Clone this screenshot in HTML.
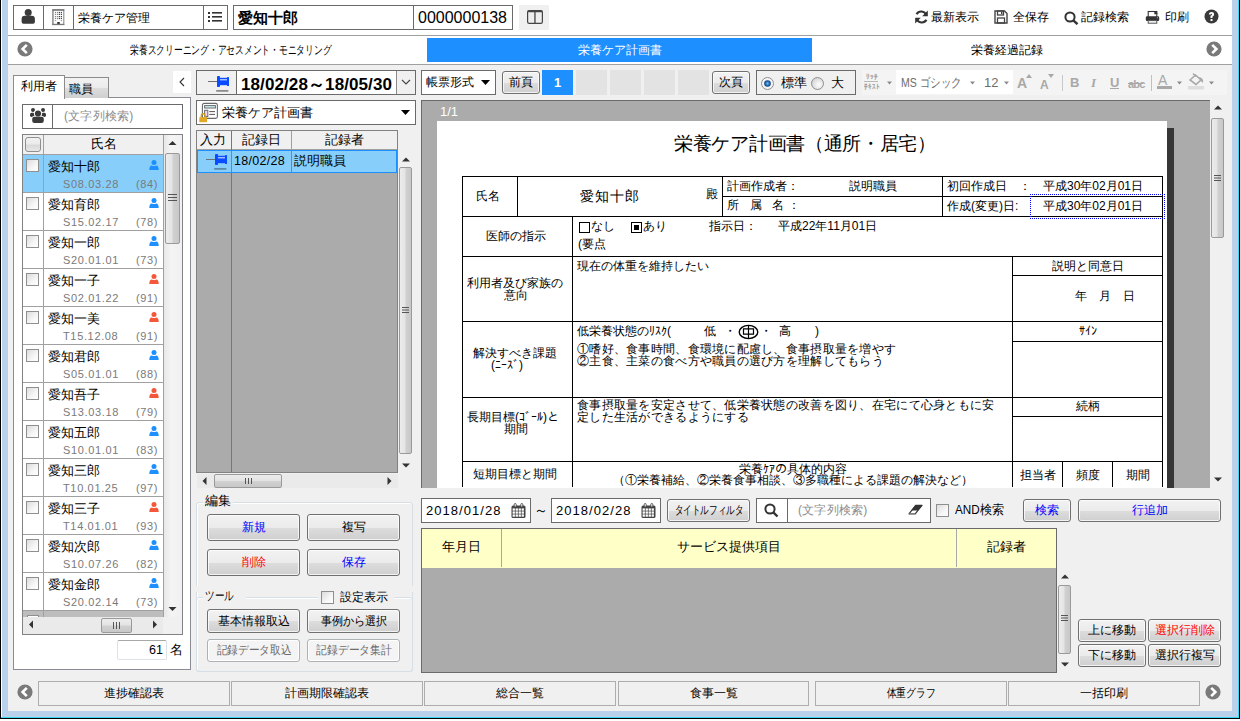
<!DOCTYPE html>
<html><head><meta charset="utf-8">
<style>
*{box-sizing:border-box;margin:0;padding:0}
html,body{width:1240px;height:721px;overflow:hidden;background:#fff}
body{position:relative;font-family:"Liberation Sans",sans-serif;font-size:12px;color:#000}
.a{position:absolute}
.bx{position:absolute;border:1px solid #6a6a6a;background:#fff}
.btn{position:absolute;border:1px solid #707070;border-radius:3px;box-shadow:inset 0 0 0 1px rgba(255,255,255,0.75);background:linear-gradient(#f2f2f2 0%,#ebebeb 50%,#dddddd 51%,#cfcfcf 100%);text-align:center;font-size:12px}
.btnd{position:absolute;border:1px solid #adb2b5;border-radius:3px;background:#f4f4f4;color:#6d6d6d;box-shadow:inset 0 0 0 1px #fff;text-align:center;font-size:12px}
.c{text-align:center}
.ck{width:13px;height:13px;border:1px solid #8e8f8f;background:linear-gradient(135deg,#dcdcdc,#f6f6f6 60%,#fff)}
.nw{white-space:nowrap}
.sq{display:inline-block;white-space:nowrap}
</style></head><body>

<!-- window frame -->
<div class="a" style="left:0;top:0;width:1px;height:719px;background:#000"></div>
<div class="a" style="left:2px;top:0;width:6px;height:717px;background:#b9d1ea"></div>
<div class="a" style="left:1232px;top:0;width:6px;height:717px;background:#b9d1ea"></div>
<div class="a" style="left:1238px;top:0;width:1px;height:718px;background:#3cd8f0"></div>
<div class="a" style="left:1239px;top:0;width:1px;height:719px;background:#000"></div>
<div class="a" style="left:2px;top:711px;width:1236px;height:6px;background:#b9d1ea"></div>
<div class="a" style="left:1px;top:717px;width:1238px;height:1px;background:#3cd8f0"></div>
<div class="a" style="left:0;top:718px;width:1240px;height:1px;background:#000"></div>

<!-- main gray area -->
<div class="a" style="left:8px;top:65px;width:1224px;height:646px;background:#f0f0f0"></div>

<!-- top bar -->
<div class="bx" style="left:13px;top:5px;width:215px;height:25px"></div>
<div class="a" style="left:43px;top:5px;width:1px;height:25px;background:#6a6a6a"></div>
<div class="a" style="left:73px;top:5px;width:1px;height:25px;background:#6a6a6a"></div>
<div class="a" style="left:203px;top:5px;width:1px;height:25px;background:#6a6a6a"></div>
<svg class="a" style="left:20px;top:8px" width="16" height="18" viewBox="0 0 16 18"><circle cx="8.2" cy="4.45" r="3.5" fill="#3a3a3a"/><path d="M1.6 14 V11 Q1.6 7.8 4.8 7.8 H11.7 Q14.9 7.8 14.9 11 V14 Q14.9 15.75 13 15.75 H3.5 Q1.6 15.75 1.6 14 Z" fill="#3a3a3a"/></svg>
<svg class="a" style="left:52px;top:9px" width="13" height="17" viewBox="0 0 13 17"><rect x="0.8" y="0.9" width="11" height="14.7" fill="#fff" stroke="#8a8a8a" stroke-width="1.1"/><rect x="0.3" y="0.9" width="1.3" height="14.7" fill="#9a9a9a"/><rect x="0.3" y="0.4" width="12" height="1.2" fill="#666"/><rect x="0.3" y="14.8" width="12" height="1.2" fill="#777"/><rect x="2.9" y="2.9" width="1.2" height="1.2" fill="#888"/><rect x="2.9" y="4.800000000000001" width="1.2" height="1.2" fill="#888"/><rect x="2.9" y="7.0" width="1.2" height="1.2" fill="#888"/><rect x="2.9" y="8.9" width="1.2" height="1.2" fill="#888"/><rect x="4.9" y="2.9" width="1.2" height="1.2" fill="#888"/><rect x="4.9" y="4.800000000000001" width="1.2" height="1.2" fill="#888"/><rect x="4.9" y="7.0" width="1.2" height="1.2" fill="#888"/><rect x="4.9" y="8.9" width="1.2" height="1.2" fill="#888"/><rect x="6.800000000000001" y="2.9" width="1.2" height="1.2" fill="#444"/><rect x="6.800000000000001" y="4.800000000000001" width="1.2" height="1.2" fill="#444"/><rect x="6.800000000000001" y="7.0" width="1.2" height="1.2" fill="#444"/><rect x="6.800000000000001" y="8.9" width="1.2" height="1.2" fill="#444"/><rect x="8.8" y="2.9" width="1.2" height="1.2" fill="#444"/><rect x="8.8" y="4.800000000000001" width="1.2" height="1.2" fill="#444"/><rect x="8.8" y="7.0" width="1.2" height="1.2" fill="#444"/><rect x="8.8" y="8.9" width="1.2" height="1.2" fill="#444"/><rect x="2.9" y="11" width="1.2" height="1.2" fill="#aaa"/><rect x="8.8" y="11" width="1.2" height="1.2" fill="#999"/><rect x="5.2" y="13" width="2.6" height="1.9" fill="#333"/></svg>
<div class="a nw" style="left:78px;top:11px;font-size:12px;line-height:15px">栄養ケア管理</div>
<svg class="a" style="left:208px;top:11px" width="14" height="12" viewBox="0 0 14 12"><g fill="#333"><rect x="0" y="1" width="2" height="2"/><rect x="0" y="5" width="2" height="2"/><rect x="0" y="9" width="2" height="2"/><rect x="4" y="1" width="10" height="1.6"/><rect x="4" y="5" width="10" height="1.6"/><rect x="4" y="9" width="10" height="1.6"/></g></svg>
<div class="bx" style="left:233px;top:5px;width:280px;height:25px"></div>
<div class="a" style="left:413px;top:5px;width:1px;height:25px;background:#6a6a6a"></div>
<div class="a nw" style="left:238px;top:8px;font-size:15px;font-weight:bold;line-height:19px">愛知十郎</div>
<div class="a nw" style="left:418px;top:8px;font-size:16px;line-height:19px">0000000138</div>
<div class="a" style="left:519px;top:5px;width:30px;height:25px;background:#f0f0f0"></div>
<svg class="a" style="left:527px;top:10px" width="16" height="14" viewBox="0 0 16 14"><rect x="0.6" y="0.6" width="14.8" height="12.8" rx="1.6" fill="#eee" stroke="#444" stroke-width="1.2"/><rect x="0.6" y="0.4" width="14.8" height="1.8" rx="0.8" fill="#444"/><rect x="7.3" y="1" width="1.3" height="12" fill="#444"/></svg>

<!-- right toolbar -->
<svg class="a" style="left:914px;top:10px" width="15" height="14" viewBox="0 0 15 14"><path d="M12.2 5 A5.3 5.3 0 0 0 2.6 4.2" fill="none" stroke="#333" stroke-width="2.2"/><path d="M2.8 9 A5.3 5.3 0 0 0 12.4 9.8" fill="none" stroke="#333" stroke-width="2.2"/><path d="M13.8 0.5 L13.8 6.3 L8.2 6.3 Z" fill="#333"/><path d="M1.2 13.5 L1.2 7.7 L6.8 7.7 Z" fill="#333"/></svg>
<div class="a nw" style="left:931px;top:10px;font-size:12px;line-height:15px">最新表示</div>
<svg class="a" style="left:994px;top:10px" width="14" height="14" viewBox="0 0 14 14"><path d="M1 1 H10.5 L13 3.5 V13 H1 Z" fill="none" stroke="#444" stroke-width="1.4"/><rect x="3.5" y="1" width="6" height="4" fill="none" stroke="#444" stroke-width="1.3"/><rect x="7" y="2" width="1.4" height="2" fill="#444"/><rect x="3.5" y="8" width="7" height="5" fill="none" stroke="#444" stroke-width="1.3"/></svg>
<div class="a nw" style="left:1013px;top:10px;font-size:12px;line-height:15px">全保存</div>
<svg class="a" style="left:1064px;top:11px" width="15" height="14" viewBox="0 0 15 14"><circle cx="6" cy="6" r="4.6" fill="none" stroke="#333" stroke-width="2"/><path d="M9.3 9.3 L13.5 13.2" stroke="#333" stroke-width="2.4"/></svg>
<div class="a nw" style="left:1081px;top:10px;font-size:12px;line-height:15px">記録検索</div>
<svg class="a" style="left:1145px;top:10px" width="15" height="15" viewBox="0 0 15 15"><rect x="3.2" y="1.5" width="8.6" height="6" fill="#fff" stroke="#333" stroke-width="1.1"/><path d="M9.3 1 H10.3 L12.4 3.1 V4.2 H9.3 Z" fill="#333"/><rect x="0.8" y="6.3" width="13.4" height="4.8" rx="1.4" fill="#333"/><circle cx="12.3" cy="7.8" r="0.5" fill="#ddd"/><rect x="3.2" y="10.6" width="8.6" height="2.6" fill="#fff" stroke="#555" stroke-width="1"/></svg>
<div class="a nw" style="left:1165px;top:10px;font-size:12px;line-height:15px">印刷</div>
<svg class="a" style="left:1204px;top:9px" width="15" height="15" viewBox="0 0 15 15"><circle cx="7.5" cy="7.5" r="7" fill="#3a3a3a"/><path d="M4.9 5.6 Q4.9 3 7.5 3 Q10.1 3 10.1 5.4 Q10.1 6.8 8.5 7.5 L8.5 9 L6.5 9 L6.5 6.8 Q8 6.3 8 5.5 Q8 4.8 7.5 4.8 Q6.9 4.8 6.9 5.6 Z" fill="#fff"/><rect x="6.5" y="10" width="2" height="2" fill="#fff"/></svg>

<!-- nav bar content -->
<svg class="a" style="left:17px;top:41px" width="16" height="16" viewBox="0 0 16 16"><circle cx="8" cy="8" r="7.6" fill="#7a7a7a"/><path d="M9.8 3.8 L5.6 8 L9.8 12.2" fill="none" stroke="#fff" stroke-width="2.6"/></svg>
<div class="a nw" style="left:130px;top:43px;font-size:12px;line-height:14px;transform:scaleX(0.73);transform-origin:0 0">栄養スクリーニング・アセスメント・モニタリング</div>
<div class="a" style="left:427px;top:38px;width:385px;height:24px;background:#1e8fff"></div>
<div class="a nw c" style="left:427px;top:43px;width:385px;font-size:12px;line-height:14px;color:#fff">栄養ケア計画書</div>
<div class="a nw c" style="left:813px;top:43px;width:387px;font-size:12px;line-height:14px">栄養経過記録</div>
<svg class="a" style="left:1206px;top:41px" width="16" height="16" viewBox="0 0 16 16"><circle cx="8" cy="8" r="7.6" fill="#7a7a7a"/><path d="M6.2 3.8 L10.4 8 L6.2 12.2" fill="none" stroke="#fff" stroke-width="2.6"/></svg>

<!-- nav -->
<div class="a" style="left:8px;top:35px;width:1224px;height:1px;background:#a0a0a0"></div>
<div class="a" style="left:8px;top:64px;width:1224px;height:1px;background:#a0a0a0"></div>

<!-- LEFT PANEL -->
<div class="a" style="left:13px;top:97px;width:178px;height:573px;border:1px solid #898c95;background:#fff"></div>
<div class="a" style="left:64px;top:77px;width:45px;height:21px;border:1px solid #8c8c8c;border-bottom:none;background:linear-gradient(#f2f2f2 0%,#ebebeb 50%,#dddddd 51%,#cfcfcf 100%)"></div>
<div class="a nw" style="left:69px;top:82px;font-size:12px;line-height:15px">職員</div>
<div class="a" style="left:13px;top:75px;width:52px;height:24px;border:1px solid #8c8c8c;border-bottom:none;background:#fff"></div>
<div class="a nw" style="left:21px;top:79px;font-size:12px;line-height:15px">利用者</div>
<div class="a" style="left:173px;top:71px;width:18px;height:22px;background:#fff"></div>
<svg class="a" style="left:178px;top:77px" width="8" height="10" viewBox="0 0 8 10"><path d="M6 1 L2 5 L6 9" fill="none" stroke="#333" stroke-width="1.1"/></svg>
<div class="bx" style="left:22px;top:104px;width:161px;height:25px"></div>
<div class="a" style="left:52px;top:104px;width:1px;height:25px;background:#6a6a6a"></div>
<svg class="a" style="left:29px;top:108px" width="18" height="16" viewBox="0 0 18 16"><g fill="#3a3a3a"><circle cx="4" cy="2" r="2"/><circle cx="14" cy="2" r="2"/><rect x="1" y="4.7" width="4.8" height="4.2" rx="1.6"/><rect x="12.2" y="4.7" width="4.8" height="4.2" rx="1.6"/></g><circle cx="9" cy="5.5" r="4.1" fill="#fff"/><rect x="2.5" y="8.1" width="13" height="7.6" rx="2.6" fill="#fff"/><g fill="#3a3a3a"><circle cx="9" cy="5.5" r="3.1"/><rect x="3.2" y="8.8" width="11.6" height="6.2" rx="2.2"/></g></svg>
<div class="a nw" style="left:64px;top:109px;font-size:12px;line-height:15px;color:#8c8c8c;letter-spacing:0.2px">(文字列検索)</div>

<!-- list -->
<div class="a" style="left:22px;top:134px;width:161px;height:501px;border:1px solid #828282;background:#fff"></div>
<div class="a" style="left:23px;top:135px;width:140px;height:20px;background:#f0f0f0;border-bottom:1px solid #a0a0a0"></div>
<div class="a" style="left:43px;top:135px;width:1px;height:20px;background:#a0a0a0"></div>
<div class="a" style="left:25px;top:137px;width:16px;height:15px;border:1px solid #8e8f8f;border-radius:3px;background:linear-gradient(#f2f2f2,#ebebeb 45%,#d9d9d9 55%,#e8e8e8)"></div>
<div class="a nw c" style="left:44px;top:137px;width:119px;font-size:12.5px;line-height:15px">氏名</div>
<div class="a" style="left:23px;top:155px;width:140px;height:38px;background:#87cefa;border-bottom:1px solid #a0a0a0"></div>
<div class="a" style="left:43px;top:155px;width:1px;height:38px;background:#a0a0a0"></div>
<div class="a ck" style="left:26px;top:159px"></div>
<div class="a nw" style="left:48px;top:159px;font-size:13px;line-height:15px">愛知十郎</div>
<svg class="a" style="left:149px;top:160px" width="10" height="10" viewBox="0 0 10 10"><circle cx="5" cy="2.6" r="2.5" fill="#1e8fff"/><path d="M0.3 10 Q0.3 5.4 2.8 5.4 Q5 6.4 7.2 5.4 Q9.7 5.4 9.7 10 Z" fill="#1e8fff"/></svg>
<div class="a nw" style="left:63px;top:177px;font-size:11px;line-height:14px;color:#7a7a7a;letter-spacing:0.65px">S08.03.28</div>
<div class="a nw" style="left:136px;top:177px;font-size:11px;line-height:14px;color:#7a7a7a;letter-spacing:0.65px">(84)</div>
<div class="a" style="left:23px;top:193px;width:140px;height:38px;background:#fff;border-bottom:1px solid #a0a0a0"></div>
<div class="a" style="left:43px;top:193px;width:1px;height:38px;background:#a0a0a0"></div>
<div class="a ck" style="left:26px;top:197px"></div>
<div class="a nw" style="left:48px;top:197px;font-size:13px;line-height:15px">愛知育郎</div>
<svg class="a" style="left:149px;top:198px" width="10" height="10" viewBox="0 0 10 10"><circle cx="5" cy="2.6" r="2.5" fill="#1e8fff"/><path d="M0.3 10 Q0.3 5.4 2.8 5.4 Q5 6.4 7.2 5.4 Q9.7 5.4 9.7 10 Z" fill="#1e8fff"/></svg>
<div class="a nw" style="left:63px;top:215px;font-size:11px;line-height:14px;color:#7a7a7a;letter-spacing:0.65px">S15.02.17</div>
<div class="a nw" style="left:136px;top:215px;font-size:11px;line-height:14px;color:#7a7a7a;letter-spacing:0.65px">(78)</div>
<div class="a" style="left:23px;top:231px;width:140px;height:38px;background:#fff;border-bottom:1px solid #a0a0a0"></div>
<div class="a" style="left:43px;top:231px;width:1px;height:38px;background:#a0a0a0"></div>
<div class="a ck" style="left:26px;top:235px"></div>
<div class="a nw" style="left:48px;top:235px;font-size:13px;line-height:15px">愛知一郎</div>
<svg class="a" style="left:149px;top:236px" width="10" height="10" viewBox="0 0 10 10"><circle cx="5" cy="2.6" r="2.5" fill="#1e8fff"/><path d="M0.3 10 Q0.3 5.4 2.8 5.4 Q5 6.4 7.2 5.4 Q9.7 5.4 9.7 10 Z" fill="#1e8fff"/></svg>
<div class="a nw" style="left:63px;top:253px;font-size:11px;line-height:14px;color:#7a7a7a;letter-spacing:0.65px">S20.01.01</div>
<div class="a nw" style="left:136px;top:253px;font-size:11px;line-height:14px;color:#7a7a7a;letter-spacing:0.65px">(73)</div>
<div class="a" style="left:23px;top:269px;width:140px;height:38px;background:#fff;border-bottom:1px solid #a0a0a0"></div>
<div class="a" style="left:43px;top:269px;width:1px;height:38px;background:#a0a0a0"></div>
<div class="a ck" style="left:26px;top:273px"></div>
<div class="a nw" style="left:48px;top:273px;font-size:13px;line-height:15px">愛知一子</div>
<svg class="a" style="left:149px;top:274px" width="10" height="10" viewBox="0 0 10 10"><circle cx="5" cy="2.6" r="2.5" fill="#f4583a"/><path d="M0.3 10 Q0.3 5.4 2.8 5.4 Q5 6.4 7.2 5.4 Q9.7 5.4 9.7 10 Z" fill="#f4583a"/></svg>
<div class="a nw" style="left:63px;top:291px;font-size:11px;line-height:14px;color:#7a7a7a;letter-spacing:0.65px">S02.01.22</div>
<div class="a nw" style="left:136px;top:291px;font-size:11px;line-height:14px;color:#7a7a7a;letter-spacing:0.65px">(91)</div>
<div class="a" style="left:23px;top:307px;width:140px;height:38px;background:#fff;border-bottom:1px solid #a0a0a0"></div>
<div class="a" style="left:43px;top:307px;width:1px;height:38px;background:#a0a0a0"></div>
<div class="a ck" style="left:26px;top:311px"></div>
<div class="a nw" style="left:48px;top:311px;font-size:13px;line-height:15px">愛知一美</div>
<svg class="a" style="left:149px;top:312px" width="10" height="10" viewBox="0 0 10 10"><circle cx="5" cy="2.6" r="2.5" fill="#f4583a"/><path d="M0.3 10 Q0.3 5.4 2.8 5.4 Q5 6.4 7.2 5.4 Q9.7 5.4 9.7 10 Z" fill="#f4583a"/></svg>
<div class="a nw" style="left:63px;top:329px;font-size:11px;line-height:14px;color:#7a7a7a;letter-spacing:0.65px">T15.12.08</div>
<div class="a nw" style="left:136px;top:329px;font-size:11px;line-height:14px;color:#7a7a7a;letter-spacing:0.65px">(91)</div>
<div class="a" style="left:23px;top:345px;width:140px;height:38px;background:#fff;border-bottom:1px solid #a0a0a0"></div>
<div class="a" style="left:43px;top:345px;width:1px;height:38px;background:#a0a0a0"></div>
<div class="a ck" style="left:26px;top:349px"></div>
<div class="a nw" style="left:48px;top:349px;font-size:13px;line-height:15px">愛知君郎</div>
<svg class="a" style="left:149px;top:350px" width="10" height="10" viewBox="0 0 10 10"><circle cx="5" cy="2.6" r="2.5" fill="#1e8fff"/><path d="M0.3 10 Q0.3 5.4 2.8 5.4 Q5 6.4 7.2 5.4 Q9.7 5.4 9.7 10 Z" fill="#1e8fff"/></svg>
<div class="a nw" style="left:63px;top:367px;font-size:11px;line-height:14px;color:#7a7a7a;letter-spacing:0.65px">S05.01.01</div>
<div class="a nw" style="left:136px;top:367px;font-size:11px;line-height:14px;color:#7a7a7a;letter-spacing:0.65px">(88)</div>
<div class="a" style="left:23px;top:383px;width:140px;height:38px;background:#fff;border-bottom:1px solid #a0a0a0"></div>
<div class="a" style="left:43px;top:383px;width:1px;height:38px;background:#a0a0a0"></div>
<div class="a ck" style="left:26px;top:387px"></div>
<div class="a nw" style="left:48px;top:387px;font-size:13px;line-height:15px">愛知吾子</div>
<svg class="a" style="left:149px;top:388px" width="10" height="10" viewBox="0 0 10 10"><circle cx="5" cy="2.6" r="2.5" fill="#f4583a"/><path d="M0.3 10 Q0.3 5.4 2.8 5.4 Q5 6.4 7.2 5.4 Q9.7 5.4 9.7 10 Z" fill="#f4583a"/></svg>
<div class="a nw" style="left:63px;top:405px;font-size:11px;line-height:14px;color:#7a7a7a;letter-spacing:0.65px">S13.03.18</div>
<div class="a nw" style="left:136px;top:405px;font-size:11px;line-height:14px;color:#7a7a7a;letter-spacing:0.65px">(79)</div>
<div class="a" style="left:23px;top:421px;width:140px;height:38px;background:#fff;border-bottom:1px solid #a0a0a0"></div>
<div class="a" style="left:43px;top:421px;width:1px;height:38px;background:#a0a0a0"></div>
<div class="a ck" style="left:26px;top:425px"></div>
<div class="a nw" style="left:48px;top:425px;font-size:13px;line-height:15px">愛知五郎</div>
<svg class="a" style="left:149px;top:426px" width="10" height="10" viewBox="0 0 10 10"><circle cx="5" cy="2.6" r="2.5" fill="#1e8fff"/><path d="M0.3 10 Q0.3 5.4 2.8 5.4 Q5 6.4 7.2 5.4 Q9.7 5.4 9.7 10 Z" fill="#1e8fff"/></svg>
<div class="a nw" style="left:63px;top:443px;font-size:11px;line-height:14px;color:#7a7a7a;letter-spacing:0.65px">S10.01.01</div>
<div class="a nw" style="left:136px;top:443px;font-size:11px;line-height:14px;color:#7a7a7a;letter-spacing:0.65px">(83)</div>
<div class="a" style="left:23px;top:459px;width:140px;height:38px;background:#fff;border-bottom:1px solid #a0a0a0"></div>
<div class="a" style="left:43px;top:459px;width:1px;height:38px;background:#a0a0a0"></div>
<div class="a ck" style="left:26px;top:463px"></div>
<div class="a nw" style="left:48px;top:463px;font-size:13px;line-height:15px">愛知三郎</div>
<svg class="a" style="left:149px;top:464px" width="10" height="10" viewBox="0 0 10 10"><circle cx="5" cy="2.6" r="2.5" fill="#1e8fff"/><path d="M0.3 10 Q0.3 5.4 2.8 5.4 Q5 6.4 7.2 5.4 Q9.7 5.4 9.7 10 Z" fill="#1e8fff"/></svg>
<div class="a nw" style="left:63px;top:481px;font-size:11px;line-height:14px;color:#7a7a7a;letter-spacing:0.65px">T10.01.25</div>
<div class="a nw" style="left:136px;top:481px;font-size:11px;line-height:14px;color:#7a7a7a;letter-spacing:0.65px">(97)</div>
<div class="a" style="left:23px;top:497px;width:140px;height:38px;background:#fff;border-bottom:1px solid #a0a0a0"></div>
<div class="a" style="left:43px;top:497px;width:1px;height:38px;background:#a0a0a0"></div>
<div class="a ck" style="left:26px;top:501px"></div>
<div class="a nw" style="left:48px;top:501px;font-size:13px;line-height:15px">愛知三子</div>
<svg class="a" style="left:149px;top:502px" width="10" height="10" viewBox="0 0 10 10"><circle cx="5" cy="2.6" r="2.5" fill="#f4583a"/><path d="M0.3 10 Q0.3 5.4 2.8 5.4 Q5 6.4 7.2 5.4 Q9.7 5.4 9.7 10 Z" fill="#f4583a"/></svg>
<div class="a nw" style="left:63px;top:519px;font-size:11px;line-height:14px;color:#7a7a7a;letter-spacing:0.65px">T14.01.01</div>
<div class="a nw" style="left:136px;top:519px;font-size:11px;line-height:14px;color:#7a7a7a;letter-spacing:0.65px">(93)</div>
<div class="a" style="left:23px;top:535px;width:140px;height:38px;background:#fff;border-bottom:1px solid #a0a0a0"></div>
<div class="a" style="left:43px;top:535px;width:1px;height:38px;background:#a0a0a0"></div>
<div class="a ck" style="left:26px;top:539px"></div>
<div class="a nw" style="left:48px;top:539px;font-size:13px;line-height:15px">愛知次郎</div>
<svg class="a" style="left:149px;top:540px" width="10" height="10" viewBox="0 0 10 10"><circle cx="5" cy="2.6" r="2.5" fill="#1e8fff"/><path d="M0.3 10 Q0.3 5.4 2.8 5.4 Q5 6.4 7.2 5.4 Q9.7 5.4 9.7 10 Z" fill="#1e8fff"/></svg>
<div class="a nw" style="left:63px;top:557px;font-size:11px;line-height:14px;color:#7a7a7a;letter-spacing:0.65px">S10.07.26</div>
<div class="a nw" style="left:136px;top:557px;font-size:11px;line-height:14px;color:#7a7a7a;letter-spacing:0.65px">(82)</div>
<div class="a" style="left:23px;top:573px;width:140px;height:38px;background:#fff;border-bottom:1px solid #a0a0a0"></div>
<div class="a" style="left:43px;top:573px;width:1px;height:38px;background:#a0a0a0"></div>
<div class="a ck" style="left:26px;top:577px"></div>
<div class="a nw" style="left:48px;top:577px;font-size:13px;line-height:15px">愛知金郎</div>
<svg class="a" style="left:149px;top:578px" width="10" height="10" viewBox="0 0 10 10"><circle cx="5" cy="2.6" r="2.5" fill="#1e8fff"/><path d="M0.3 10 Q0.3 5.4 2.8 5.4 Q5 6.4 7.2 5.4 Q9.7 5.4 9.7 10 Z" fill="#1e8fff"/></svg>
<div class="a nw" style="left:63px;top:595px;font-size:11px;line-height:14px;color:#7a7a7a;letter-spacing:0.65px">S20.02.14</div>
<div class="a nw" style="left:136px;top:595px;font-size:11px;line-height:14px;color:#7a7a7a;letter-spacing:0.65px">(73)</div>
<div class="a" style="left:23px;top:611px;width:140px;height:6px;background:#bdbdbd"></div>
<div class="a" style="left:43px;top:611px;width:1px;height:6px;background:#a0a0a0"></div>
<div class="a" style="left:27px;top:615px;width:12px;height:2px;border:1px solid #8e8f8f;border-bottom:none;background:#fff"></div>
<!-- vscroll -->
<div class="a" style="left:163px;top:135px;width:19px;height:482px;background:linear-gradient(90deg,#e8e8e8,#f4f4f4 40%,#f0f0f0);border-left:1px solid #a0a0a0"></div>
<svg class="a" style="left:168px;top:140px" width="9" height="6" viewBox="0 0 9 6"><path d="M0.5 5 L4.5 1 L8.5 5 Z" fill="#333"/></svg>
<div class="a" style="left:165px;top:153px;width:15px;height:91px;border:1px solid #9a9a9a;border-radius:2px;background:linear-gradient(90deg,#ececec,#e4e4e4 45%,#d0d0d0 55%,#c8c8c8)"></div>
<svg class="a" style="left:168px;top:194px" width="9" height="7" viewBox="0 0 9 7"><g fill="#555"><rect x="0" y="0" width="9" height="1"/><rect x="0" y="3" width="9" height="1"/><rect x="0" y="6" width="9" height="1"/></g></svg>
<svg class="a" style="left:168px;top:606px" width="9" height="6" viewBox="0 0 9 6"><path d="M0.5 1 L4.5 5 L8.5 1 Z" fill="#333"/></svg>
<!-- hscroll -->
<div class="a" style="left:23px;top:617px;width:159px;height:17px;background:#eaeaea"></div>
<div class="a" style="left:163px;top:617px;width:19px;height:17px;background:#f0f0f0"></div>
<svg class="a" style="left:28px;top:620px" width="6" height="9" viewBox="0 0 6 9"><path d="M5 0.5 L1 4.5 L5 8.5 Z" fill="#333"/></svg>
<div class="a" style="left:101px;top:618px;width:31px;height:15px;border:1px solid #9a9a9a;border-radius:2px;background:linear-gradient(#ececec,#e4e4e4 45%,#d0d0d0 55%,#c8c8c8)"></div>
<svg class="a" style="left:113px;top:622px" width="7" height="7" viewBox="0 0 7 7"><g fill="#555"><rect x="0" y="0" width="1" height="7"/><rect x="3" y="0" width="1" height="7"/><rect x="6" y="0" width="1" height="7"/></g></svg>
<svg class="a" style="left:152px;top:620px" width="6" height="9" viewBox="0 0 6 9"><path d="M1 0.5 L5 4.5 L1 8.5 Z" fill="#333"/></svg>
<!-- count -->
<div class="a" style="left:117px;top:640px;width:50px;height:20px;border:1px solid #dde2e8;border-top-color:#a8a8a8;border-radius:2px;background:#fff"></div>
<div class="a nw" style="left:149px;top:643px;font-size:12.5px;line-height:15px">61</div>
<div class="a nw" style="left:170px;top:642px;font-size:13px;line-height:15px">名</div>

<!-- MIDDLE PANEL -->
<div class="bx" style="left:196px;top:70px;width:220px;height:25px"></div>
<div class="a" style="left:197px;top:71px;width:40px;height:23px;background:#f0f0f0;border-right:1px solid #6a6a6a"></div>
<svg class="a" style="left:207px;top:75px" width="24" height="18" viewBox="0 0 24 18"><rect x="1" y="6" width="9" height="1" fill="#707070"/><rect x="10" y="1" width="3" height="11" rx="0.8" fill="#0a4cff"/><rect x="12.5" y="2.8" width="8" height="7.4" fill="#0a4cff"/><rect x="13" y="4.3" width="7" height="1" fill="#e8f0ff"/><rect x="20" y="1.9" width="2" height="9.1" rx="0.6" fill="#0a4cff"/><rect x="9" y="15" width="12.5" height="1.7" rx="0.8" fill="#8a8a8a"/></svg>
<div class="a nw" style="left:241px;top:75px;font-size:17px;font-weight:bold;line-height:19px;letter-spacing:0.1px">18/02/28～18/05/30</div>
<div class="a" style="left:396px;top:71px;width:19px;height:23px;background:#f0f0f0;border-left:1px solid #8a8a8a"></div>
<svg class="a" style="left:401px;top:79px" width="10" height="7" viewBox="0 0 10 7"><path d="M1 1 L5 5 L9 1" fill="none" stroke="#444" stroke-width="1.1"/></svg>

<div class="bx" style="left:196px;top:100px;width:220px;height:25px"></div>
<svg class="a" style="left:199px;top:102px" width="20" height="21" viewBox="0 0 20 21"><rect x="3.4" y="1.4" width="15" height="15" rx="1.8" fill="#fff" stroke="#6a6a6a" stroke-width="1.1"/><rect x="5.6" y="3.6" width="10.8" height="2.4" fill="#c8f4f4" stroke="#6a6a6a" stroke-width="1"/><rect x="5.6" y="8.3" width="3.2" height="6.3" fill="#f0d8f8" stroke="#6a6a6a" stroke-width="1"/><rect x="10.3" y="9" width="5.7" height="1.1" fill="#666"/><rect x="10.3" y="11.9" width="5.7" height="1.1" fill="#666"/><path d="M2.3 15.5 V13.7 A1.9 1.9 0 0 1 6.1 13.7 V15.5" fill="none" stroke="#d4a020" stroke-width="1.4"/><rect x="0.3" y="15.2" width="7.7" height="5" fill="#e0a824"/></svg>
<div class="a nw" style="left:222px;top:105px;font-size:13px;line-height:15px">栄養ケア計画書</div>
<svg class="a" style="left:401px;top:110px" width="9" height="5" viewBox="0 0 9 5"><path d="M0 0 H9 L4.5 5 Z" fill="#000"/></svg>

<!-- records table -->
<div class="a" style="left:196px;top:130px;width:202px;height:343px;border:1px solid #828282;background:#ababab"></div>
<div class="a" style="left:197px;top:131px;width:200px;height:19px;background:#f0f0f0;border-bottom:1px solid #a0a0a0"></div>
<div class="a" style="left:231px;top:131px;width:1px;height:341px;background:#777"></div>
<div class="a" style="left:291px;top:131px;width:1px;height:19px;background:#a0a0a0"></div>
<div class="a nw" style="left:200px;top:133px;font-size:12.5px;line-height:15px">入力</div>
<div class="a nw c" style="left:232px;top:133px;width:59px;font-size:12.5px;line-height:15px">記録日</div>
<div class="a nw c" style="left:292px;top:133px;width:105px;font-size:12.5px;line-height:15px">記録者</div>
<div class="a" style="left:197px;top:150px;width:200px;height:23px;background:#87cefa;border:1px solid #1e8fff"></div>
<div class="a" style="left:231px;top:151px;width:1px;height:21px;background:#6a8aa0"></div>
<div class="a" style="left:291px;top:151px;width:1px;height:21px;background:#6a8aa0"></div>
<svg class="a" style="left:205px;top:153px" width="24" height="18" viewBox="0 0 24 18"><rect x="1" y="6" width="9" height="1" fill="#707070"/><rect x="10" y="1" width="3" height="11" rx="0.8" fill="#0a4cff"/><rect x="12.5" y="2.8" width="8" height="7.4" fill="#0a4cff"/><rect x="13" y="4.3" width="7" height="1" fill="#e8f0ff"/><rect x="20" y="1.9" width="2" height="9.1" rx="0.6" fill="#0a4cff"/><rect x="9" y="15" width="12.5" height="1.7" rx="0.8" fill="#5a88a8"/></svg>
<div class="a nw" style="left:234px;top:154px;font-size:12.5px;line-height:15px;letter-spacing:0.3px">18/02/28</div>
<div class="a nw" style="left:294px;top:154px;font-size:12.5px;line-height:15px">説明職員</div>
<!-- vscroll -->
<div class="a" style="left:398px;top:150px;width:15px;height:323px;background:#f0f0f0"></div>
<svg class="a" style="left:402px;top:157px" width="8" height="5" viewBox="0 0 8 5"><path d="M0 4.5 L4 0.5 L8 4.5 Z" fill="#333"/></svg>
<div class="a" style="left:399px;top:167px;width:13px;height:287px;border:1px solid #9a9a9a;border-radius:2px;background:linear-gradient(90deg,#ececec,#e4e4e4 45%,#d0d0d0 55%,#c8c8c8)"></div>
<svg class="a" style="left:402px;top:307px" width="7" height="6" viewBox="0 0 7 6"><g fill="#555"><rect x="0" y="0" width="7" height="1"/><rect x="0" y="2.5" width="7" height="1"/><rect x="0" y="5" width="7" height="1"/></g></svg>
<svg class="a" style="left:402px;top:463px" width="8" height="5" viewBox="0 0 8 5"><path d="M0 0.5 L4 4.5 L8 0.5 Z" fill="#333"/></svg>
<!-- hscroll -->
<div class="a" style="left:197px;top:474px;width:201px;height:14px;background:#eaeaea"></div>
<svg class="a" style="left:202px;top:477px" width="5" height="8" viewBox="0 0 5 8"><path d="M4.5 0 L0.5 4 L4.5 8 Z" fill="#333"/></svg>
<div class="a" style="left:214px;top:474px;width:68px;height:14px;border:1px solid #9a9a9a;border-radius:2px;background:linear-gradient(#ececec,#e4e4e4 45%,#d0d0d0 55%,#c8c8c8)"></div>
<svg class="a" style="left:245px;top:478px" width="7" height="6" viewBox="0 0 7 6"><g fill="#555"><rect x="0" y="0" width="1" height="6"/><rect x="3" y="0" width="1" height="6"/><rect x="6" y="0" width="1" height="6"/></g></svg>
<svg class="a" style="left:387px;top:477px" width="5" height="8" viewBox="0 0 5 8"><path d="M0.5 0 L4.5 4 L0.5 8 Z" fill="#333"/></svg>

<!-- edit group -->
<div class="a" style="left:196px;top:502px;width:217px;height:170px;border:1px solid #d5dfe5;border-radius:3px;box-shadow:inset 1px 1px #fff"></div>
<div class="a nw" style="left:203px;top:494px;padding:0 2px;background:#f0f0f0;font-size:12.5px;line-height:15px">編集</div>
<div class="btn" style="left:207px;top:514px;width:93px;height:27px;line-height:25px;color:#0000ff">新規</div>
<div class="btn" style="left:307px;top:514px;width:93px;height:27px;line-height:25px">複写</div>
<div class="btn" style="left:207px;top:549px;width:93px;height:27px;line-height:25px;color:#ff0000">削除</div>
<div class="btn" style="left:307px;top:549px;width:93px;height:27px;line-height:25px;color:#0000ff">保存</div>
<div class="a" style="left:196px;top:586px;width:218px;height:6px;background:#f0f0f0"></div>
<div class="a" style="left:196px;top:597px;width:217px;height:75px;border:1px solid #d5dfe5;border-radius:3px;box-shadow:inset 1px 1px #fff"></div>
<div class="a nw" style="left:203px;top:589px;padding:0 2px;background:#f0f0f0;font-size:12.5px;line-height:15px"><span class="sq" style="transform:scaleX(0.74);transform-origin:left">ツール</span></div>
<div class="a" style="left:318px;top:589px;width:76px;height:16px;background:#f0f0f0"></div>
<div class="a ck" style="left:321px;top:591px"></div>
<div class="a nw" style="left:340px;top:590px;font-size:12px;line-height:15px">設定表示</div>
<div class="btn" style="left:207px;top:609px;width:93px;height:24px;line-height:22px">基本情報取込</div>
<div class="btn" style="left:307px;top:609px;width:93px;height:24px;line-height:22px"><span class="sq" style="transform:scaleX(0.92);transform-origin:center">事例から選択</span></div>
<div class="btnd" style="left:207px;top:639px;width:93px;height:23px;line-height:21px"><span class="sq" style="transform:scaleX(0.89);transform-origin:center">記録データ取込</span></div>
<div class="btnd" style="left:307px;top:639px;width:93px;height:23px;line-height:21px"><span class="sq" style="transform:scaleX(0.9);transform-origin:center">記録データ集計</span></div>

<!-- DOCUMENT AREA -->
<div class="a" style="left:421px;top:100px;width:789px;height:388px;background:#ababab;border-left:1px solid #6a6a6a;border-top:1px solid #6a6a6a"></div>
<div class="a nw" style="left:440px;top:104px;font-size:13px;line-height:15px;color:#fff">1/1</div>
<div class="a" style="left:437px;top:121px;width:730px;height:367px;background:#fff"></div>
<div class="a" style="left:1167px;top:128px;width:7px;height:360px;background:#363636"></div>
<div class="a" id="paper" style="left:0;top:0;width:1240px;height:721px;clip-path:polygon(437px 121px,1167px 121px,1167px 487px,437px 487px)">
<div class="a nw" style="left:674px;top:133px;font-size:19px;line-height:21px;letter-spacing:-0.3px">栄養ケア計画書（通所・居宅）</div>
<style>.L{position:absolute;background:#000}.t{position:absolute;white-space:nowrap;font-size:12px;line-height:13px}</style>
<!-- outer -->
<div class="L" style="left:462px;top:176px;width:701px;height:1px"></div>
<div class="L" style="left:462px;top:176px;width:1px;height:320px"></div>
<div class="L" style="left:1162px;top:176px;width:1px;height:320px"></div>
<!-- row lines -->
<div class="L" style="left:462px;top:216px;width:701px;height:1px"></div>
<div class="L" style="left:462px;top:256px;width:701px;height:1px"></div>
<div class="L" style="left:462px;top:321px;width:701px;height:1px"></div>
<div class="L" style="left:462px;top:397px;width:701px;height:1px"></div>
<div class="L" style="left:462px;top:461px;width:701px;height:1px"></div>
<!-- row1 cols -->
<div class="L" style="left:517px;top:176px;width:1px;height:40px"></div>
<div class="L" style="left:722px;top:176px;width:1px;height:40px"></div>
<div class="L" style="left:942px;top:176px;width:1px;height:40px"></div>
<div class="L" style="left:722px;top:196px;width:440px;height:1px"></div>
<!-- col divider -->
<div class="L" style="left:572px;top:216px;width:1px;height:280px"></div>
<div class="L" style="left:1012px;top:256px;width:1px;height:240px"></div>
<div class="L" style="left:1012px;top:275px;width:150px;height:1px"></div>
<div class="L" style="left:1012px;top:341px;width:150px;height:1px"></div>
<div class="L" style="left:1012px;top:416px;width:150px;height:1px"></div>
<div class="L" style="left:1062px;top:461px;width:1px;height:40px"></div>
<div class="L" style="left:1112px;top:461px;width:1px;height:40px"></div>
<!-- focus rect -->
<div class="a" style="left:1030px;top:194px;width:135px;height:25px;border:1px dotted #0000ff"></div>
<!-- texts -->
<div class="t" style="left:476px;top:190px">氏名</div>
<div class="t" style="left:580px;top:189px;font-size:14px;line-height:15px;letter-spacing:1px">愛知十郎</div>
<div class="t" style="left:706px;top:188px">殿</div>
<div class="t" style="left:727px;top:180px">計画作成者：</div>
<div class="t" style="left:849px;top:180px">説明職員</div>
<div class="t" style="left:727px;top:199px;letter-spacing:3.6px">所 属 名：</div>
<div class="t" style="left:947px;top:180px">初回作成日　：</div>
<div class="t" style="left:1043px;top:180px">平成30年02月01日</div>
<div class="t" style="left:947px;top:200px">作成(変更)日:</div>
<div class="t" style="left:1043px;top:200px">平成30年02月01日</div>
<div class="t" style="left:486px;top:230px">医師の指示</div>
<div class="a" style="left:579px;top:222px;width:11px;height:11px;border:1px solid #000"></div><div class="t" style="left:591px;top:220px">なし</div><div class="a" style="left:631px;top:222px;width:11px;height:11px;border:1px solid #000;padding:2px"><div style="width:5px;height:5px;background:#000"></div></div><div class="t" style="left:643px;top:220px">あり</div>
<div class="t" style="left:709px;top:220px">指示日：</div>
<div class="t" style="left:778px;top:220px">平成22年11月01日</div>
<div class="t" style="left:578px;top:238px">(要点</div>
<div class="t" style="left:467px;top:277px">利用者及び家族の</div>
<div class="t" style="left:504px;top:289px">意向</div>
<div class="t" style="left:577px;top:260px">現在の体重を維持したい</div>
<div class="t c" style="left:1013px;top:260px;width:149px">説明と同意日</div>
<div class="t" style="left:1075px;top:290px;word-spacing:0">年　月　日</div>
<div class="t" style="left:473px;top:347px">解決すべき課題</div>
<div class="t" style="left:491px;top:359px">(ﾆｰｽﾞ)</div>
<div class="t" style="left:577px;top:325px">低栄養状態のﾘｽｸ(</div>
<div class="t" style="left:704px;top:325px">低</div>
<div class="t" style="left:724px;top:325px">・</div>
<svg class="a" style="left:738px;top:324px" width="21" height="16" viewBox="0 0 21 16"><ellipse cx="10.5" cy="8" rx="9.3" ry="6.6" fill="none" stroke="#000" stroke-width="1.4"/><path d="M5.5 4.8 H15.5 V10.2 H5.5 Z M10.5 2 V14" fill="none" stroke="#000" stroke-width="1.2"/></svg>
<div class="t" style="left:760px;top:325px">・</div>
<div class="t" style="left:779px;top:325px">高</div>
<div class="t" style="left:815px;top:325px">)</div>
<div class="t" style="left:577px;top:343px;letter-spacing:0.28px">①嗜好、食事時間、食環境に配慮し、食事摂取量を増やす</div>
<div class="t" style="left:577px;top:355px;letter-spacing:0.28px">②主食、主菜の食べ方や職員の選び方を理解してもらう</div>
<div class="t c" style="left:1013px;top:325px;width:149px">ｻｲﾝ</div>
<div class="t" style="left:467px;top:411px">長期目標(ｺﾞｰﾙ)と</div>
<div class="t" style="left:504px;top:423px">期間</div>
<div class="t" style="left:577px;top:399px;letter-spacing:0.28px">食事摂取量を安定させて、低栄養状態の改善を図り、在宅にて心身ともに安</div>
<div class="t" style="left:577px;top:411px;letter-spacing:0.28px">定した生活ができるようにする</div>
<div class="t c" style="left:1013px;top:400px;width:149px">続柄</div>
<div class="t" style="left:473px;top:468px">短期目標と期間</div>
<div class="t c" style="left:573px;top:463px;width:439px">栄養ｹｱの具体的内容</div>
<div class="t c" style="left:573px;top:474px;width:439px">（①栄養補給、②栄養食事相談、③多職種による課題の解決など）</div>
<div class="t c" style="left:1013px;top:469px;width:49px">担当者</div>
<div class="t c" style="left:1063px;top:469px;width:49px">頻度</div>
<div class="t c" style="left:1113px;top:469px;width:49px">期間</div>
</div>
<!-- doc vscroll -->
<div class="a" style="left:1210px;top:100px;width:16px;height:388px;background:#f0f0f0"></div>
<svg class="a" style="left:1214px;top:105px" width="8" height="5" viewBox="0 0 8 5"><path d="M0 4.5 L4 0.5 L8 4.5 Z" fill="#333"/></svg>
<div class="a" style="left:1211px;top:118px;width:13px;height:120px;border:1px solid #9a9a9a;border-radius:2px;background:linear-gradient(90deg,#ececec,#e4e4e4 45%,#d0d0d0 55%,#c8c8c8)"></div>
<svg class="a" style="left:1214px;top:175px" width="7" height="6" viewBox="0 0 7 6"><g fill="#555"><rect x="0" y="0" width="7" height="1"/><rect x="0" y="2.5" width="7" height="1"/><rect x="0" y="5" width="7" height="1"/></g></svg>
<svg class="a" style="left:1214px;top:477px" width="8" height="5" viewBox="0 0 8 5"><path d="M0 0.5 L4 4.5 L8 0.5 Z" fill="#333"/></svg>

<!-- TOOLBAR ROW -->
<div class="bx" style="left:421px;top:70px;width:75px;height:25px"></div>
<div class="a nw" style="left:426px;top:75px;font-size:12px;line-height:15px">帳票形式</div>
<svg class="a" style="left:481px;top:80px" width="9" height="5" viewBox="0 0 9 5"><path d="M0 0 H9 L4.5 5 Z" fill="#000"/></svg>
<div class="btn" style="left:502px;top:71px;width:38px;height:23px;line-height:20px">前頁</div>
<div class="a" style="left:542px;top:70px;width:31px;height:25px;background:#1e8fff"></div>
<div class="a nw c" style="left:542px;top:75px;width:31px;font-size:13px;font-weight:bold;line-height:15px;color:#fff">1</div>
<div class="a" style="left:576px;top:70px;width:31px;height:25px;background:#e3e3e3"></div>
<div class="a" style="left:610px;top:70px;width:31px;height:25px;background:#e3e3e3"></div>
<div class="a" style="left:644px;top:70px;width:31px;height:25px;background:#e3e3e3"></div>
<div class="a" style="left:678px;top:70px;width:31px;height:25px;background:#e3e3e3"></div>
<div class="btn" style="left:712px;top:71px;width:38px;height:23px;line-height:21px">次頁</div>
<div class="a" style="left:756px;top:70px;width:100px;height:25px;border:1px solid #6a6a6a"></div>
<svg class="a" style="left:761px;top:77px" width="13" height="13" viewBox="0 0 13 13"><defs><radialGradient id="rg1" cx="0.5" cy="0.5" r="0.5"><stop offset="0" stop-color="#6ec0f0"/><stop offset="0.7" stop-color="#1a5fa8"/><stop offset="1" stop-color="#123d78"/></radialGradient></defs><circle cx="6.5" cy="6.5" r="6" fill="#f4f4f4" stroke="#8e8f8f"/><circle cx="6.5" cy="6.5" r="3.3" fill="url(#rg1)"/></svg>
<div class="a nw" style="left:781px;top:76px;font-size:12.5px;line-height:15px">標準</div>
<svg class="a" style="left:811px;top:77px" width="13" height="13" viewBox="0 0 13 13"><defs><radialGradient id="rg2" cx="0.6" cy="0.6" r="0.6"><stop offset="0" stop-color="#fff"/><stop offset="1" stop-color="#d4d4d4"/></radialGradient></defs><circle cx="6.5" cy="6.5" r="6" fill="url(#rg2)" stroke="#8e8f8f"/></svg>
<div class="a nw" style="left:831px;top:76px;font-size:12.5px;line-height:15px">大</div>
<!-- rich text toolbar -->
<div class="a" style="left:862px;top:70px;width:365px;height:25px;background:#f4f4f4"></div>
<div class="a nw" style="left:866px;top:72px;font-size:7px;line-height:9px;color:#a0a0a0;font-weight:bold">ﾘｯﾁ</div><div class="a" style="left:864px;top:81px;width:14px;height:1px;background:#b8b8b8"></div><div class="a nw" style="left:864px;top:82px;font-size:7px;line-height:9px;color:#a0a0a0;font-weight:bold">ﾃｷｽﾄ</div>
<svg class="a" style="left:886px;top:81px" width="7" height="4" viewBox="0 0 7 4"><path d="M1 0.5 H6 L3.5 3.5 Z" fill="#8a8a8a"/></svg>
<div class="a" style="left:896px;top:70px;width:117px;height:24px;background:#fff"></div>
<div class="a nw" style="left:901px;top:75px;font-size:13px;line-height:15px;color:#6e6e6e"><span class="sq" style="transform:scaleX(0.81);transform-origin:left">MS ゴシック</span></div>
<svg class="a" style="left:969px;top:81px" width="7" height="4" viewBox="0 0 7 4"><path d="M1 0.5 H6 L3.5 3.5 Z" fill="#8a8a8a"/></svg>
<div class="a nw" style="left:984px;top:75px;font-size:13px;line-height:15px;color:#6e6e6e">12</div>
<svg class="a" style="left:1003px;top:81px" width="7" height="4" viewBox="0 0 7 4"><path d="M1 0.5 H6 L3.5 3.5 Z" fill="#8a8a8a"/></svg>
<div class="a nw" style="left:1017px;top:75px;font-size:14px;line-height:17px;color:#a8a8a8;font-weight:bold">A</div>
<svg class="a" style="left:1026px;top:74px" width="6" height="4" viewBox="0 0 6 4"><path d="M0 4 L3 0 L6 4 Z" fill="#a8a8a8"/></svg>
<div class="a nw" style="left:1040px;top:78px;font-size:12px;line-height:15px;color:#a8a8a8;font-weight:bold">A</div>
<svg class="a" style="left:1048px;top:74px" width="6" height="4" viewBox="0 0 6 4"><path d="M0 0 L3 4 L6 0 Z" fill="#a8a8a8"/></svg>
<div class="a" style="left:1062px;top:75px;width:1px;height:16px;background:#c8c8c8"></div>
<div class="a nw" style="left:1070px;top:75px;font-size:13px;line-height:15px;color:#a8a8a8;font-weight:bold">B</div>
<div class="a nw" style="left:1091px;top:75px;font-size:13px;line-height:15px;color:#a8a8a8;font-style:italic;font-weight:bold;font-family:'Liberation Serif',serif">I</div>
<div class="a nw" style="left:1110px;top:75px;font-size:13px;line-height:15px;color:#a8a8a8;font-weight:bold">U</div>
<div class="a" style="left:1110px;top:88px;width:9px;height:1px;background:#a8a8a8"></div>
<div class="a nw" style="left:1128px;top:77px;font-size:11px;line-height:14px;color:#a8a8a8;font-weight:bold;letter-spacing:-0.8px">abc</div>
<div class="a" style="left:1128px;top:83px;width:15px;height:1px;background:#a8a8a8"></div>
<div class="a" style="left:1151px;top:75px;width:1px;height:16px;background:#c0c0c0"></div>
<div class="a nw" style="left:1158px;top:72px;font-size:14px;line-height:16px;color:#a8a8a8">A</div>
<div class="a" style="left:1157px;top:86px;width:15px;height:3px;background:#a8a8a8"></div>
<svg class="a" style="left:1176px;top:81px" width="7" height="4" viewBox="0 0 7 4"><path d="M1 0.5 H6 L3.5 3.5 Z" fill="#8a8a8a"/></svg>
<svg class="a" style="left:1188px;top:73px" width="17" height="17" viewBox="0 0 17 17"><path d="M2 7 L7.5 2 L13 7 L8 11.5 Z" fill="none" stroke="#a8a8a8" stroke-width="1.6"/><path d="M5 0.5 L8 3.5" stroke="#a8a8a8" stroke-width="1.4"/><path d="M11 4 Q16 5 15 10 L13 8 Z" fill="#a8a8a8"/><rect x="0" y="13" width="16" height="3.5" fill="#dedede"/></svg>
<svg class="a" style="left:1208px;top:81px" width="7" height="4" viewBox="0 0 7 4"><path d="M1 0.5 H6 L3.5 3.5 Z" fill="#8a8a8a"/></svg>

<!-- LOWER SECTION -->
<div class="bx" style="left:421px;top:498px;width:110px;height:25px"></div>
<div class="a nw" style="left:426px;top:503px;font-size:13px;line-height:15px;letter-spacing:1.05px">2018/01/28</div>
<svg class="a" style="left:511px;top:503px" width="15" height="16" viewBox="0 0 15 16"><rect x="0.5" y="2.4" width="14" height="12.6" rx="1.6" fill="#444"/><rect x="1.6" y="5.4" width="2.3" height="2.3" fill="#fff"/><rect x="1.6" y="8.4" width="2.3" height="2.3" fill="#fff"/><rect x="1.6" y="11.4" width="2.3" height="2.3" fill="#fff"/><rect x="4.6" y="5.4" width="2.3" height="2.3" fill="#fff"/><rect x="4.6" y="8.4" width="2.3" height="2.3" fill="#fff"/><rect x="4.6" y="11.4" width="2.3" height="2.3" fill="#fff"/><rect x="7.6" y="5.4" width="2.3" height="2.3" fill="#fff"/><rect x="7.6" y="8.4" width="2.3" height="2.3" fill="#fff"/><rect x="7.6" y="11.4" width="2.3" height="2.3" fill="#fff"/><rect x="10.6" y="5.4" width="2.3" height="2.3" fill="#fff"/><rect x="10.6" y="8.4" width="2.3" height="2.3" fill="#fff"/><rect x="10.6" y="11.4" width="2.3" height="2.3" fill="#fff"/><rect x="3.2" y="0.5" width="2" height="3.6" rx="1" fill="#fff" stroke="#444" stroke-width="0.9"/><rect x="9.8" y="0.5" width="2" height="3.6" rx="1" fill="#fff" stroke="#444" stroke-width="0.9"/></svg>
<div class="a nw" style="left:534px;top:502px;font-size:14px;line-height:16px">～</div>
<div class="bx" style="left:551px;top:498px;width:110px;height:25px"></div>
<div class="a nw" style="left:556px;top:503px;font-size:13px;line-height:15px;letter-spacing:1.05px">2018/02/28</div>
<svg class="a" style="left:641px;top:503px" width="15" height="16" viewBox="0 0 15 16"><rect x="0.5" y="2.4" width="14" height="12.6" rx="1.6" fill="#444"/><rect x="1.6" y="5.4" width="2.3" height="2.3" fill="#fff"/><rect x="1.6" y="8.4" width="2.3" height="2.3" fill="#fff"/><rect x="1.6" y="11.4" width="2.3" height="2.3" fill="#fff"/><rect x="4.6" y="5.4" width="2.3" height="2.3" fill="#fff"/><rect x="4.6" y="8.4" width="2.3" height="2.3" fill="#fff"/><rect x="4.6" y="11.4" width="2.3" height="2.3" fill="#fff"/><rect x="7.6" y="5.4" width="2.3" height="2.3" fill="#fff"/><rect x="7.6" y="8.4" width="2.3" height="2.3" fill="#fff"/><rect x="7.6" y="11.4" width="2.3" height="2.3" fill="#fff"/><rect x="10.6" y="5.4" width="2.3" height="2.3" fill="#fff"/><rect x="10.6" y="8.4" width="2.3" height="2.3" fill="#fff"/><rect x="10.6" y="11.4" width="2.3" height="2.3" fill="#fff"/><rect x="3.2" y="0.5" width="2" height="3.6" rx="1" fill="#fff" stroke="#444" stroke-width="0.9"/><rect x="9.8" y="0.5" width="2" height="3.6" rx="1" fill="#fff" stroke="#444" stroke-width="0.9"/></svg>
<div class="btn" style="left:667px;top:499px;width:83px;height:23px;line-height:21px"><span class="sq" style="transform:scaleX(0.715);transform-origin:center;margin:0 -20px">タイトルフィルタ</span></div>
<div class="bx" style="left:756px;top:498px;width:175px;height:25px"></div>
<div class="a" style="left:787px;top:498px;width:1px;height:25px;background:#6a6a6a"></div>
<svg class="a" style="left:764px;top:503px" width="15" height="15" viewBox="0 0 15 15"><circle cx="6" cy="6" r="4.6" fill="none" stroke="#333" stroke-width="2"/><path d="M9.3 9.3 L13.5 13.5" stroke="#333" stroke-width="2.4"/></svg>
<div class="a nw" style="left:798px;top:503px;font-size:12px;line-height:15px;color:#8c8c8c;letter-spacing:0.2px">(文字列検索)</div>
<svg class="a" style="left:907px;top:504px" width="17" height="12" viewBox="0 0 17 12"><path d="M8.7 1.3 H15 L8.2 9.8 H2 Z" fill="#fff" stroke="#333" stroke-width="1.2" stroke-linejoin="round"/><path d="M8.5 1 H15.3 L11 6.6 H4.2 Z" fill="#333"/><path d="M2.3 9.9 H8.2" stroke="#999" stroke-width="1"/></svg>
<div class="a ck" style="left:936px;top:504px"></div>
<div class="a nw" style="left:955px;top:503px;font-size:12.5px;line-height:15px"><span class="sq" style="transform:scaleX(0.935);transform-origin:left">AND検索</span></div>
<div class="btn" style="left:1023px;top:499px;width:48px;height:23px;line-height:21px;color:#0000ff">検索</div>
<div class="btn" style="left:1078px;top:499px;width:143px;height:23px;line-height:21px;color:#0000ff">行追加</div>

<div class="a" style="left:421px;top:528px;width:636px;height:145px;background:#ababab;border:1px solid #6a6a6a"></div>
<div class="a" style="left:422px;top:529px;width:634px;height:39px;background:#ffffc8"></div>
<div class="a" style="left:501px;top:529px;width:1px;height:38px;background:#a8a8a8"></div>
<div class="a" style="left:956px;top:529px;width:1px;height:38px;background:#a8a8a8"></div>
<div class="a nw c" style="left:422px;top:540px;width:79px;font-size:12.5px;line-height:15px">年月日</div>
<div class="a nw c" style="left:502px;top:540px;width:454px;font-size:12.5px;line-height:15px">サービス提供項目</div>
<div class="a nw c" style="left:957px;top:540px;width:99px;font-size:12.5px;line-height:15px">記録者</div>
<!-- lower vscroll -->
<div class="a" style="left:1058px;top:568px;width:14px;height:104px;background:#f0f0f0"></div>
<svg class="a" style="left:1061px;top:574px" width="8" height="5" viewBox="0 0 8 5"><path d="M0 4.5 L4 0.5 L8 4.5 Z" fill="#333"/></svg>
<div class="a" style="left:1058px;top:585px;width:13px;height:69px;border:1px solid #9a9a9a;border-radius:2px;background:linear-gradient(90deg,#ececec,#e4e4e4 45%,#d0d0d0 55%,#c8c8c8)"></div>
<svg class="a" style="left:1061px;top:615px" width="7" height="6" viewBox="0 0 7 6"><g fill="#555"><rect x="0" y="0" width="7" height="1"/><rect x="0" y="2.5" width="7" height="1"/><rect x="0" y="5" width="7" height="1"/></g></svg>
<svg class="a" style="left:1061px;top:662px" width="8" height="5" viewBox="0 0 8 5"><path d="M0 0.5 L4 4.5 L8 0.5 Z" fill="#333"/></svg>
<div class="btn" style="left:1078px;top:619px;width:68px;height:23px;line-height:21px">上に移動</div>
<div class="btn" style="left:1148px;top:619px;width:73px;height:23px;line-height:21px;color:#ff0000">選択行削除</div>
<div class="btn" style="left:1078px;top:644px;width:68px;height:23px;line-height:21px">下に移動</div>
<div class="btn" style="left:1148px;top:644px;width:73px;height:23px;line-height:21px">選択行複写</div>

<!-- BOTTOM NAV -->
<svg class="a" style="left:17px;top:684px" width="16" height="16" viewBox="0 0 16 16"><circle cx="8" cy="8" r="7.6" fill="#7a7a7a"/><path d="M9.8 3.8 L5.6 8 L9.8 12.2" fill="none" stroke="#fff" stroke-width="2.6"/></svg>
<div class="a nw c" style="left:38px;top:681px;width:192px;height:25px;border:1px solid #adadad;line-height:23px">進捗確認表</div>
<div class="a nw c" style="left:231px;top:681px;width:192px;height:25px;border:1px solid #adadad;line-height:23px">計画期限確認表</div>
<div class="a nw c" style="left:424px;top:681px;width:192px;height:25px;border:1px solid #adadad;line-height:23px">総合一覧</div>
<div class="a nw c" style="left:618px;top:681px;width:191px;height:25px;border:1px solid #adadad;line-height:23px">食事一覧</div>
<div class="a nw c" style="left:815px;top:681px;width:192px;height:25px;border:1px solid #adadad;line-height:23px"><span class="sq" style="transform:scaleX(0.81)">体重グラフ</span></div>
<div class="a nw c" style="left:1008px;top:681px;width:192px;height:25px;border:1px solid #adadad;line-height:23px">一括印刷</div>
<svg class="a" style="left:1205px;top:684px" width="16" height="16" viewBox="0 0 16 16"><circle cx="8" cy="8" r="7.6" fill="#7a7a7a"/><path d="M6.2 3.8 L10.4 8 L6.2 12.2" fill="none" stroke="#fff" stroke-width="2.6"/></svg>

</body></html>
